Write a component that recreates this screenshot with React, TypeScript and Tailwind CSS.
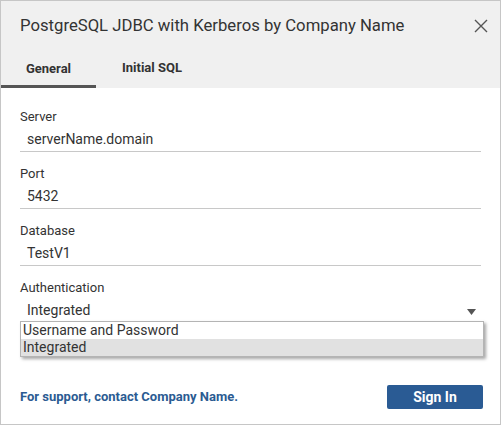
import React from "react";

function Field({ label, value, arrow }: { label: string; value: string; arrow?: boolean }) {
  return (
    <div className="flex flex-col">
      <div className="h-[22px] text-[13px] leading-[22px] text-[#333]">{label}</div>
      <div className="flex h-[24px] items-center justify-between border-b border-[#c8c8c8] pl-[7px] pr-[5px] text-[14px] text-[#333]">
        <span>{value}</span>
        {arrow && (
          <svg width="9" height="6" viewBox="0 0 9 6" className="mt-[3px]">
            <path d="M0 0 L9 0 L4.5 6 Z" fill="#555" />
          </svg>
        )}
      </div>
    </div>
  );
}

export default function App() {
  return (
    <div className="h-[426px] w-[502px] bg-white" style={{ fontFamily: "Roboto, 'Liberation Sans', sans-serif" }}>
      <div className="relative flex h-[425px] w-[501px] flex-col border border-[#c6c6c6]">
        <div className="bg-[#f0f0f0]">
          <div className="flex h-[50px] items-center justify-between pl-[19px] pr-[12px]">
            <span className="text-[16.7px] font-normal text-[#333]">PostgreSQL JDBC with Kerberos by Company Name</span>
            <svg width="14" height="14" viewBox="0 0 14 14">
              <path d="M1 1 L13 13 M13 1 L1 13" stroke="#555" strokeWidth="1.4" />
            </svg>
          </div>
          <div className="flex h-[37px] items-end">
            <div className="flex h-[37px] w-[95px] items-center justify-center border-b-[3px] border-[#555] pt-[1px] text-[13px] font-bold text-[#333]">
              General
            </div>
            <div className="flex h-[37px] items-center pl-[26px] pb-[3px] text-[13px] font-bold text-[#333]">Initial SQL</div>
          </div>
        </div>
        <div className="flex flex-col gap-[11px] px-[19px] pt-[18px]">
          <Field label="Server" value="serverName.domain" />
          <Field label="Port" value="5432" />
          <Field label="Database" value="TestV1" />
          <Field label="Authentication" value="Integrated" arrow />
        </div>
        <div className="absolute left-[19px] top-[320px] w-[464px] border border-[#b4b4b4] bg-white text-[14px] leading-[17px] text-[#333] shadow-[2px_2px_3px_rgba(0,0,0,0.35)]">
          <div className="pl-[2px]">Username and Password</div>
          <div className="bg-[#e1e1e1] pl-[2px]">Integrated</div>
        </div>
        <div className="mt-auto mb-[15px] flex items-center justify-between pl-[19px] pr-[17px]">
          <span className="text-[13px] font-bold text-[#2b5b92]">For support, contact Company Name.</span>
          <button className="h-[24px] w-[96px] rounded-[2px] bg-[#2a5b94] text-[14px] font-bold text-white">Sign In</button>
        </div>
      </div>
    </div>
  );
}
